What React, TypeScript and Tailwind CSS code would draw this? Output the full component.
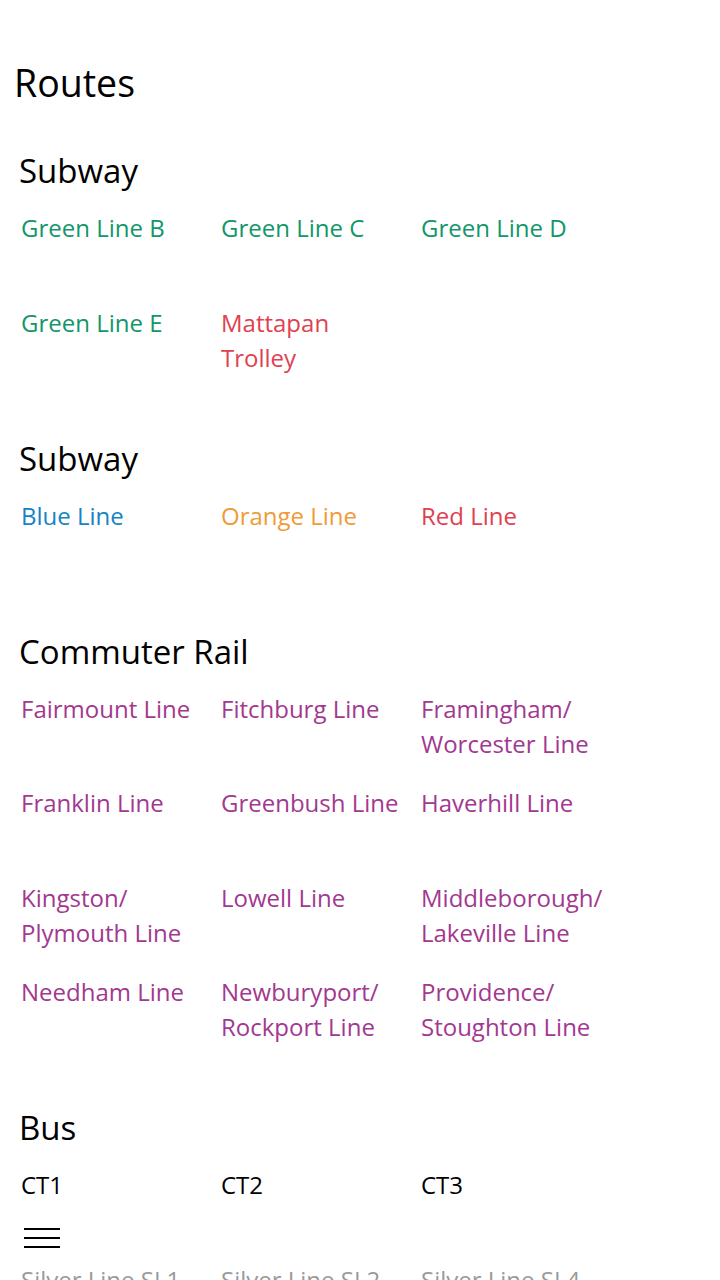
import React from 'react';

type Route = { name: string; color: string };

const GREEN = 'text-[#12966a]';
const RED = 'text-[#e0414f]';
const BLUE = 'text-[#1584c4]';
const ORANGE = 'text-[#ef9b38]';
const PURPLE = 'text-[#a2388f]';
const BLACK = 'text-black';
const SILVER = 'text-[#9a9a9a]';

const sections: { title: string; routes: Route[] }[] = [
  {
    title: 'Subway',
    routes: [
      { name: 'Green Line B', color: GREEN },
      { name: 'Green Line C', color: GREEN },
      { name: 'Green Line D', color: GREEN },
      { name: 'Green Line E', color: GREEN },
      { name: 'Mattapan Trolley', color: RED },
    ],
  },
  {
    title: 'Subway',
    routes: [
      { name: 'Blue Line', color: BLUE },
      { name: 'Orange Line', color: ORANGE },
      { name: 'Red Line', color: RED },
    ],
  },
  {
    title: 'Commuter Rail',
    routes: [
      { name: 'Fairmount Line', color: PURPLE },
      { name: 'Fitchburg Line', color: PURPLE },
      { name: 'Framingham/ Worcester Line', color: PURPLE },
      { name: 'Franklin Line', color: PURPLE },
      { name: 'Greenbush Line', color: PURPLE },
      { name: 'Haverhill Line', color: PURPLE },
      { name: 'Kingston/ Plymouth Line', color: PURPLE },
      { name: 'Lowell Line', color: PURPLE },
      { name: 'Middleborough/ Lakeville Line', color: PURPLE },
      { name: 'Needham Line', color: PURPLE },
      { name: 'Newburyport/ Rockport Line', color: PURPLE },
      { name: 'Providence/ Stoughton Line', color: PURPLE },
    ],
  },
  {
    title: 'Bus',
    routes: [
      { name: 'CT1', color: BLACK },
      { name: 'CT2', color: BLACK },
      { name: 'CT3', color: BLACK },
      { name: 'Silver Line SL1', color: SILVER },
      { name: 'Silver Line SL2', color: SILVER },
      { name: 'Silver Line SL4', color: SILVER },
    ],
  },
];

const App: React.FC = () => {
  return (
    <div className="relative h-[1280px] w-[720px] overflow-hidden bg-white font-['Open_Sans',sans-serif] text-black">
      <h1 className="pl-[14px] pt-[59px] text-[37.5px] leading-[48px] font-normal">Routes</h1>

      <div className="mt-[44px]">
        {sections.map((section, i) => (
          <section key={i} className="mb-[39.5px]">
            <h2 className="pl-[19px] text-[33px] leading-[40px] font-normal">{section.title}</h2>
            <div className="mt-[19px] grid grid-cols-[200px_200px_200px] pl-[21px]">
              {section.routes.map(route => (
                <div key={route.name} className="h-[94.5px] pr-[12px]">
                  <p className={`text-[24px] leading-[35px] ${route.color}`}>{route.name}</p>
                </div>
              ))}
            </div>
          </section>
        ))}
      </div>

      <button className="absolute left-[24px] top-[1228px] flex w-[36px] flex-col gap-[7px]">
        <span className="block h-[2px] w-full bg-black" />
        <span className="block h-[2px] w-full bg-black" />
        <span className="block h-[2px] w-full bg-black" />
      </button>
    </div>
  );
};

export default App;
